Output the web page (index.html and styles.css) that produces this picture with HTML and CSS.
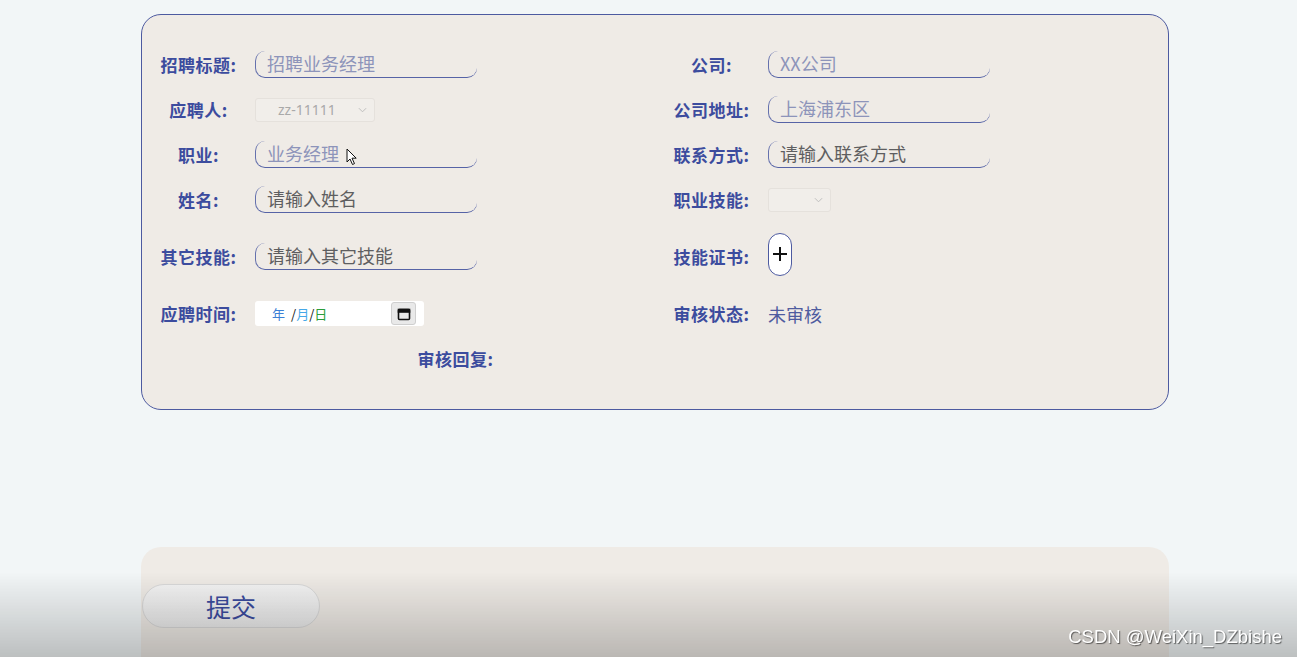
FILE: index.html
```html
<!DOCTYPE html>
<html lang="zh-CN">
<head>
    <meta charset="UTF-8">
    <meta name="viewport" content="width=device-width, initial-scale=1.0">
    <title>招聘信息</title>
    <link rel="stylesheet" href="styles.css">
</head>
<body>
    <div class="page">
        <form class="card">
            <div class="field">
                <label class="field-label">招聘标题:</label>
                <input class="line-input filled" value="招聘业务经理" readonly>
            </div>
            <div class="field">
                <label class="field-label">公司:</label>
                <input class="line-input filled" value="XX公司" readonly>
            </div>

            <div class="field">
                <label class="field-label">应聘人:</label>
                <div class="fake-select applicant">
                    <span>zz-11111</span>
                    <svg class="chevron" viewBox="0 0 10 6"><polyline points="1 1 5 5 9 1"></polyline></svg>
                </div>
            </div>
            <div class="field">
                <label class="field-label">公司地址:</label>
                <input class="line-input filled" value="上海浦东区" readonly>
            </div>

            <div class="field">
                <label class="field-label">职业:</label>
                <input class="line-input filled" value="业务经理" readonly>
            </div>
            <div class="field">
                <label class="field-label">联系方式:</label>
                <input class="line-input" placeholder="请输入联系方式">
            </div>

            <div class="field">
                <label class="field-label">姓名:</label>
                <input class="line-input" placeholder="请输入姓名">
            </div>
            <div class="field">
                <label class="field-label">职业技能:</label>
                <div class="fake-select skills">
                    <span></span>
                    <svg class="chevron" viewBox="0 0 10 6"><polyline points="1 1 5 5 9 1"></polyline></svg>
                </div>
            </div>

            <div class="field">
                <label class="field-label">其它技能:</label>
                <input class="line-input" placeholder="请输入其它技能">
            </div>
            <div class="field">
                <label class="field-label">技能证书:</label>
                <button type="button" class="upload">
                    <svg viewBox="0 0 14 14"><line x1="7" y1="0" x2="7" y2="14"></line><line x1="0" y1="7" x2="14" y2="7"></line></svg>
                </button>
            </div>

            <div class="field">
                <label class="field-label">应聘时间:</label>
                <div class="date-box">
                    <span class="date-y">年</span>
                    <span class="date-sep">/</span><span class="date-m">月</span><span class="date-sep">/</span><span class="date-d">日</span>
                    <span class="date-btn">
                        <svg viewBox="0 0 14 14"><rect x="1.5" y="2.5" width="11" height="10" rx="1"></rect><rect x="1.5" y="2.5" width="11" height="2.5" class="fill"></rect></svg>
                    </span>
                </div>
            </div>
            <div class="field">
                <label class="field-label">审核状态:</label>
                <span class="status">未审核</span>
            </div>

            <div class="field wide">
                <label class="field-label">审核回复:</label>
            </div>
        </form>

        <div class="footer-card">
            <button type="button" class="submit">提交</button>
        </div>
    </div>

    <!-- mouse pointer from the capture -->
    <svg class="cursor" viewBox="0 0 12 18">
        <path d="M1 1 L1 14 L4 11 L6.5 16.5 L8.5 15.6 L6 10.2 L10.2 10.2 Z"></path>
    </svg>

    <div class="shade"></div>
    <div class="watermark">CSDN @WeiXin_DZbishe</div>
</body>
</html>
```

FILE: styles.css
```css
* {
    margin: 0;
    padding: 0;
    box-sizing: border-box;
}

body {
    font-family: "Noto Sans CJK SC", "Noto Sans", sans-serif;
    background-color: #f2f6f7;
    overflow: hidden;
    height: 657px;
}

.page {
    padding: 14px 0 0 141px;
}

.card {
    width: 1028px;
    background: #efebe6;
    border: 1px solid #4d5aa0;
    border-radius: 20px;
    padding: 36px 0 37px;
    display: grid;
    grid-template-columns: 1fr 1fr;
    grid-template-rows: repeat(4, 27px) 51px 27px 27px;
    row-gap: 18px;
}

.field {
    display: flex;
    align-items: center;
}

.field.wide {
    grid-column: 1 / -1;
    padding-left: 257px;
}

.field-label {
    width: 113px;
    flex-shrink: 0;
    text-align: center;
    font-size: 17px;
    font-weight: bold;
    color: #3c4c9e;
    letter-spacing: 0.5px;
}

.line-input {
    width: 222px;
    height: 27px;
    padding: 0 0 2px 11px;
    background: transparent;
    border: none;
    border-left: 1px solid #6571ad;
    border-bottom: 1px solid #5663a6;
    border-radius: 10px;
    font-family: inherit;
    font-size: 18px;
    color: #555;
    outline: none;
}

.line-input.filled {
    color: #8d94ba;
}

.line-input::placeholder {
    color: #5e5e60;
}

.fake-select {
    height: 24px;
    display: flex;
    align-items: center;
    justify-content: space-between;
    background: #f1eeea;
    border: 1px solid #e5e1dc;
    border-radius: 3px;
    font-family: "Noto Sans", "Open Sans", sans-serif;
    font-size: 14px;
    color: #a9a9a9;
}

.fake-select.applicant {
    width: 120px;
    padding: 0 7px 0 22px;
}

.fake-select.skills {
    width: 63px;
    padding: 0 7px 0 10px;
}

.chevron {
    width: 9px;
    height: 6px;
    fill: none;
    stroke: #b9b9b9;
    stroke-width: 1;
}

.upload {
    width: 24px;
    height: 43px;
    margin-top: -5px;
    background: #fff;
    border: 1px solid #4d5aa0;
    border-radius: 12px;
    display: flex;
    align-items: center;
    justify-content: center;
    cursor: pointer;
}

.upload svg {
    width: 14px;
    height: 14px;
    stroke: #111;
    stroke-width: 2;
}

.date-box {
    width: 169px;
    height: 25px;
    background: #fff;
    border-radius: 3px;
    display: flex;
    align-items: center;
    padding-left: 17px;
    font-size: 13px;
}

.date-y {
    color: #3d7fd6;
    margin-right: 6px;
}

.date-sep {
    color: #111;
}

.date-m {
    color: #45a8e8;
}

.date-d {
    color: #2a9d3a;
}

.date-btn {
    margin-left: auto;
    margin-right: 8px;
    width: 25px;
    height: 23px;
    background: #e9e9e9;
    border: 1px solid #cfcfcf;
    border-radius: 3px;
    display: flex;
    align-items: center;
    justify-content: center;
}

.date-btn svg {
    width: 14px;
    height: 14px;
    fill: none;
    stroke: #111;
    stroke-width: 1.6;
}

.date-btn .fill {
    fill: #111;
}

.status {
    font-size: 18px;
    color: #4f5c9f;
}

.footer-card {
    margin-top: 137px;
    width: 1028px;
    height: 110px;
    background: #efebe6;
    border-radius: 20px 20px 0 0;
    padding: 37px 0 0 1px;
}

.submit {
    width: 178px;
    height: 44px;
    border-radius: 22px;
    background: linear-gradient(#f4f4f4, #ececec);
    border: 1px solid #d9d9d9;
    font-family: inherit;
    font-size: 25px;
    color: #3c4c9e;
    cursor: pointer;
}

.cursor {
    position: absolute;
    left: 346px;
    top: 148px;
    width: 12px;
    height: 18px;
    fill: #fff;
    stroke: #111;
    stroke-width: 1;
}

.shade {
    position: fixed;
    left: 0;
    right: 0;
    bottom: 0;
    height: 85px;
    background: linear-gradient(rgba(0, 0, 0, 0), rgba(0, 0, 0, 0.22));
    pointer-events: none;
}

.watermark {
    position: fixed;
    right: 15px;
    bottom: 9px;
    font-family: "Liberation Sans", Arial, sans-serif;
    font-size: 18.5px;
    color: #fff;
    text-shadow: 1px 1px 1px rgba(0, 0, 0, 0.55);
}
```
